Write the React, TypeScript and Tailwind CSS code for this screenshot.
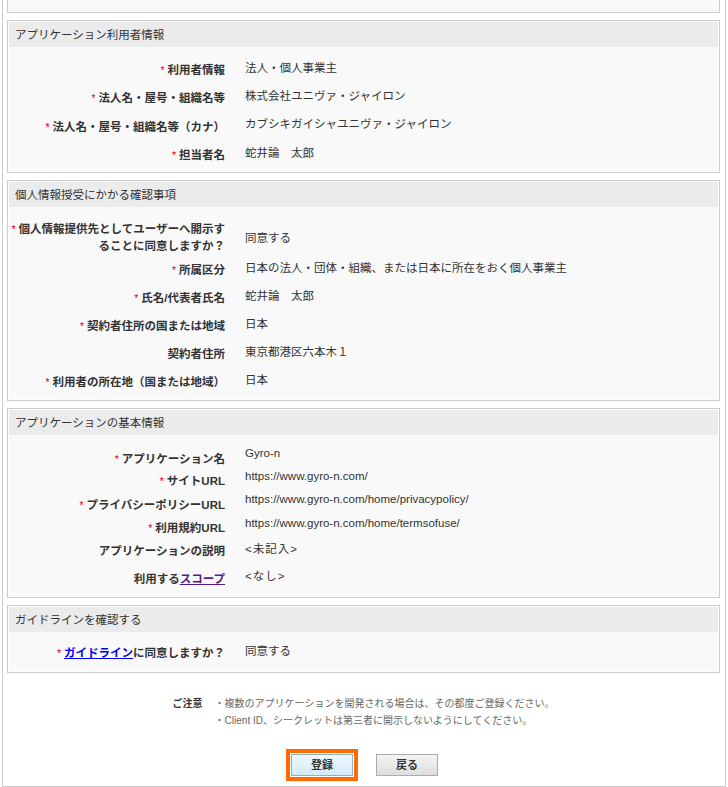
import React from "react"

type Row = {
  label: React.ReactNode
  value: React.ReactNode
  req?: boolean
  h: string
  lp: string
  vp: string
}

type Section = {
  title: string
  pt: string
  pb: string
  rows: Row[]
}

const sections: Section[] = [
  {
    title: "アプリケーション利用者情報",
    pt: "pt-[11px]",
    pb: "pb-0",
    rows: [
      { req: true, label: "利用者情報", value: "法人・個人事業主", h: "h-[28px]", lp: "pt-[4px]", vp: "pt-[2px]" },
      { req: true, label: "法人名・屋号・組織名等", value: "株式会社ユニヴァ・ジャイロン", h: "h-[29px]", lp: "pt-[4px]", vp: "pt-[2px]" },
      { req: true, label: "法人名・屋号・組織名等（カナ）", value: "カブシキガイシャユニヴァ・ジャイロン", h: "h-[28px]", lp: "pt-[4px]", vp: "pt-[1px]" },
      { req: true, label: "担当者名", value: "蛇井論　太郎", h: "h-[28px]", lp: "pt-[4px]", vp: "pt-[2px]" },
    ],
  },
  {
    title: "個人情報授受にかかる確認事項",
    pt: "pt-[12px]",
    pb: "pb-[1px]",
    rows: [
      {
        req: true,
        label: (
          <span className="leading-[17px]">
            個人情報提供先としてユーザーへ開示す
            <br />
            ることに同意しますか？
          </span>
        ),
        value: "同意する",
        h: "h-[39px]",
        lp: "pt-[2px] leading-[17px]",
        vp: "pt-[11px]",
      },
      { req: true, label: "所属区分", value: "日本の法人・団体・組織、または日本に所在をおく個人事業主", h: "h-[28px]", lp: "pt-[4px]", vp: "pt-[2px]" },
      { req: true, label: "氏名/代表者氏名", value: "蛇井論　太郎", h: "h-[28px]", lp: "pt-[4px]", vp: "pt-[2px]" },
      { req: true, label: "契約者住所の国または地域", value: "日本", h: "h-[28px]", lp: "pt-[4px]", vp: "pt-[2px]" },
      { label: "契約者住所", value: "東京都港区六本木１", h: "h-[28px]", lp: "pt-[4px]", vp: "pt-[2px]" },
      { req: true, label: "利用者の所在地（国または地域）", value: "日本", h: "h-[28px]", lp: "pt-[4px]", vp: "pt-[2px]" },
    ],
  },
  {
    title: "アプリケーションの基本情報",
    pt: "pt-[10px]",
    pb: "pb-[1px]",
    rows: [
      { req: true, label: "アプリケーション名", value: "Gyro-n", h: "h-[23px]", lp: "pt-[6px]", vp: "pt-0" },
      { req: true, label: "サイトURL", value: "https://www.gyro-n.com/", h: "h-[23px]", lp: "pt-[5px]", vp: "pt-0" },
      { req: true, label: "プライバシーポリシーURL", value: "https://www.gyro-n.com/home/privacypolicy/", h: "h-[24px]", lp: "pt-[6px]", vp: "pt-0" },
      { req: true, label: "利用規約URL", value: "https://www.gyro-n.com/home/termsofuse/", h: "h-[23px]", lp: "pt-[5px]", vp: "pt-0" },
      { label: "アプリケーションの説明", value: <span className="tracking-[1px]">{"<未記入>"}</span>, h: "h-[27px]", lp: "pt-[5px]", vp: "pt-[3px]" },
      {
        label: (
          <>
            利用する<a className="text-[#551a8b] underline">スコープ</a>
          </>
        ),
        value: <span className="tracking-[1px]">{"<なし>"}</span>,
        h: "h-[30px]",
        lp: "pt-[6px]",
        vp: "pt-[3px]",
      },
    ],
  },
  {
    title: "ガイドラインを確認する",
    pt: "pt-[9px]",
    pb: "pb-[2px]",
    rows: [
      {
        req: true,
        label: (
          <>
            <a className="text-[#0000ee] underline">ガイドライン</a>に同意しますか？
          </>
        ),
        value: "同意する",
        h: "h-[28px]",
        lp: "pt-[4px]",
        vp: "pt-[2px]",
      },
    ],
  },
]

function Panel({ section }: { section: Section }) {
  return (
    <div className="mt-[7px] border border-[#cccccc] bg-white p-[1px]">
      <div className="h-[25px] bg-[#ebebeb] pl-[6px] flex items-center leading-4">{section.title}</div>
      <div className={`bg-[#f9f9f9] ${section.pt} ${section.pb}`}>
        {section.rows.map((row, i) => (
          <div key={i} className={`flex items-start ${row.h}`}>
            <div className={`w-[216px] shrink-0 text-right font-bold leading-4 whitespace-nowrap ${row.lp}`}>
              {row.req && <span className="font-normal text-[10.5px] text-[#e60012] mr-[3px]">*</span>}
              {row.label}
            </div>
            <div className={`ml-[20px] leading-4 whitespace-nowrap ${row.vp}`}>{row.value}</div>
          </div>
        ))}
      </div>
    </div>
  )
}

export default function App() {
  return (
    <div
      className="w-[728px] h-[787px] bg-white text-[11.5px] text-[#333333] overflow-hidden"
      style={{ fontFamily: '"Liberation Sans", "Noto Sans CJK JP", sans-serif' }}
    >
      <div className="ml-[2px] w-[724px] h-[787px] border-l border-r border-b border-[#cccccc] pl-[4px] pr-[5px]">
        {/* previous panel, cut off at the top */}
        <div className="h-[13px] border-l border-r border-b border-[#cccccc] bg-[#f9f9f9]" />

        {sections.map((s) => (
          <Panel key={s.title} section={s} />
        ))}

        {/* notes */}
        <div className="mt-[22px] flex justify-center text-[10px] leading-[17px]">
          <div className="font-bold text-[#333333] mr-[12px]">ご注意</div>
          <div className="text-[#666666]">
            <div>・複数のアプリケーションを開発される場合は、その都度ご登録ください。</div>
            <div>・Client ID、シークレットは第三者に開示しないようにしてください。</div>
          </div>
        </div>

        {/* buttons */}
        <div className="mt-[25px] flex justify-center gap-[23px] pl-[2px]">
          <button className="w-[62px] h-[22px] border border-[#8fb0cb] bg-gradient-to-b from-[#eef7fd] to-[#d4ebfa] font-bold text-[11px] text-[#333333] outline-[4px] outline-solid outline-[#ff6a00] outline-offset-[1px]">
            登録
          </button>
          <button className="w-[62px] h-[22px] border border-[#acacac] bg-gradient-to-b from-[#f4f4f4] to-[#dddddd] font-bold text-[11px] text-[#333333]">
            戻る
          </button>
        </div>
      </div>
    </div>
  )
}
